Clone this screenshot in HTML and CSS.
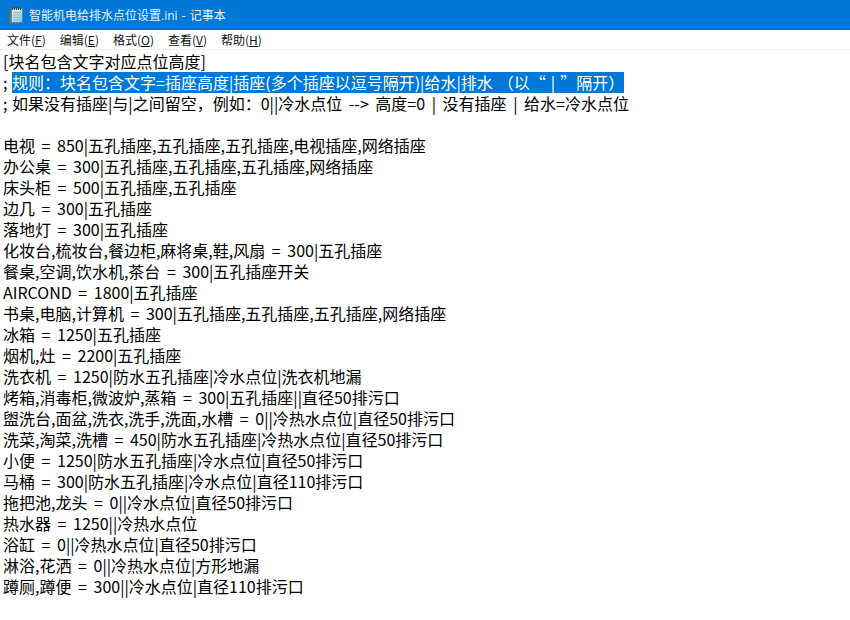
FILE: index.html
```html
<!DOCTYPE html>
<html lang="zh-CN">
<head>
<meta charset="utf-8">
<title>智能机电给排水点位设置.ini - 记事本</title>
<link rel="stylesheet" href="styles.css">
</head>
<body>
<div class="window">
  <header class="titlebar">
    <svg class="app-icon" width="16" height="18" viewBox="0 0 16 18">
      <defs>
        <linearGradient id="page" x1="0" y1="0" x2="1" y2="1">
          <stop offset="0" stop-color="#e4f6f8"/>
          <stop offset="1" stop-color="#8fc6d8"/>
        </linearGradient>
      </defs>
      <path d="M1 5l2-2v14h10l-1 0.800h-11z" fill="#6b6f5c"/>
      <path d="M3.500 2.500h11v14h-11z" fill="url(#page)" stroke="#64757d" stroke-width="0.700"/>
      <path d="M5 6.500h8M5 9h8M5 11.500h8M5 14h8" stroke="#76a9bf" stroke-width="0.700"/>
      <path d="M4.500 1v3M6.500 1v3M8.500 1v3M10.500 1v3M12.500 1v3" stroke="#2e3639" stroke-width="0.900"/>
    </svg>
    <span class="title-text">智能机电给排水点位设置.ini - 记事本</span>
  </header>
  <nav class="menubar">
    <span class="menu-item">文件(<u>F</u>)</span>
    <span class="menu-item">编辑(<u>E</u>)</span>
    <span class="menu-item">格式(<u>O</u>)</span>
    <span class="menu-item">查看(<u>V</u>)</span>
    <span class="menu-item">帮助(<u>H</u>)</span>
  </nav>
  <main class="editor">
<div class="line">[块名包含文字对应点位高度]</div>
<div class="line"><span class="semi">; </span><span class="selected">规则：块名包含文字=插座高度|插座(多个插座以逗号隔开)|给水|排水 （以“ | ”隔开）</span></div>
<div class="line"><span class="semi">; </span>如果没有插座|与|之间留空，例如：0||冷水点位 --&gt; 高度=0 | 没有插座 | 给水=冷水点位</div>
<div class="line">&nbsp;</div>
<div class="line">电视 = 850|五孔插座,五孔插座,五孔插座,电视插座,网络插座</div>
<div class="line">办公桌 = 300|五孔插座,五孔插座,五孔插座,网络插座</div>
<div class="line">床头柜 = 500|五孔插座,五孔插座</div>
<div class="line">边几 = 300|五孔插座</div>
<div class="line">落地灯 = 300|五孔插座</div>
<div class="line">化妆台,梳妆台,餐边柜,麻将桌,鞋,风扇 = 300|五孔插座</div>
<div class="line">餐桌,空调,饮水机,茶台 = 300|五孔插座开关</div>
<div class="line">AIRCOND = 1800|五孔插座</div>
<div class="line">书桌,电脑,计算机 = 300|五孔插座,五孔插座,五孔插座,网络插座</div>
<div class="line">冰箱 = 1250|五孔插座</div>
<div class="line">烟机,灶 = 2200|五孔插座</div>
<div class="line">洗衣机 = 1250|防水五孔插座|冷水点位|洗衣机地漏</div>
<div class="line">烤箱,消毒柜,微波炉,蒸箱 = 300|五孔插座||直径50排污口</div>
<div class="line">盥洗台,面盆,洗衣,洗手,洗面,水槽 = 0||冷热水点位|直径50排污口</div>
<div class="line">洗菜,淘菜,洗槽 = 450|防水五孔插座|冷热水点位|直径50排污口</div>
<div class="line">小便 = 1250|防水五孔插座|冷水点位|直径50排污口</div>
<div class="line">马桶 = 300|防水五孔插座|冷水点位|直径110排污口</div>
<div class="line">拖把池,龙头 = 0||冷水点位|直径50排污口</div>
<div class="line">热水器 = 1250||冷热水点位</div>
<div class="line">浴缸 = 0||冷热水点位|直径50排污口</div>
<div class="line">淋浴,花洒 = 0||冷热水点位|方形地漏</div>
<div class="line">蹲厕,蹲便 = 300||冷水点位|直径110排污口</div>
  </main>
</div>
</body>
</html>
```
FILE: styles.css
```css
* { box-sizing: border-box; }
html, body { margin: 0; height: 100%; background: #fff; }
body { overflow: hidden; }
.window {
  width: 850px;
  height: 620px;
  display: flex;
  flex-direction: column;
  font-family: "Noto Sans CJK SC", sans-serif;
}
.titlebar {
  height: 30px;
  background: #0078d7;
  display: flex;
  align-items: center;
  padding-left: 8px;
  gap: 5px;
  color: #e8f3fb;
  font-size: 12px;
}
.app-icon { flex: none; }
.title-text { font-family: "Open Sans", "Noto Sans CJK SC", sans-serif; word-spacing: 1px; }
.menubar {
  height: 20px;
  background: #fff;
  border-bottom: 1px solid #f0f0f0;
  display: flex;
  align-items: center;
  padding-left: 7px;
  gap: 14px;
  font-size: 12px;
  color: #111;
}
.menu-item { white-space: nowrap; }
.editor {
  flex: 1;
  padding: 1px 0 0 3px;
  font-size: 16px;
  line-height: 21px;
  color: #000;
  word-spacing: 3px;
}
.line { white-space: pre; height: 21px; }
.semi { word-spacing: 1px; }
.selected {
  display: inline-block;
  vertical-align: top;
  background: #0078d7;
  color: #fff;
  word-spacing: 1.500px;
}
```
